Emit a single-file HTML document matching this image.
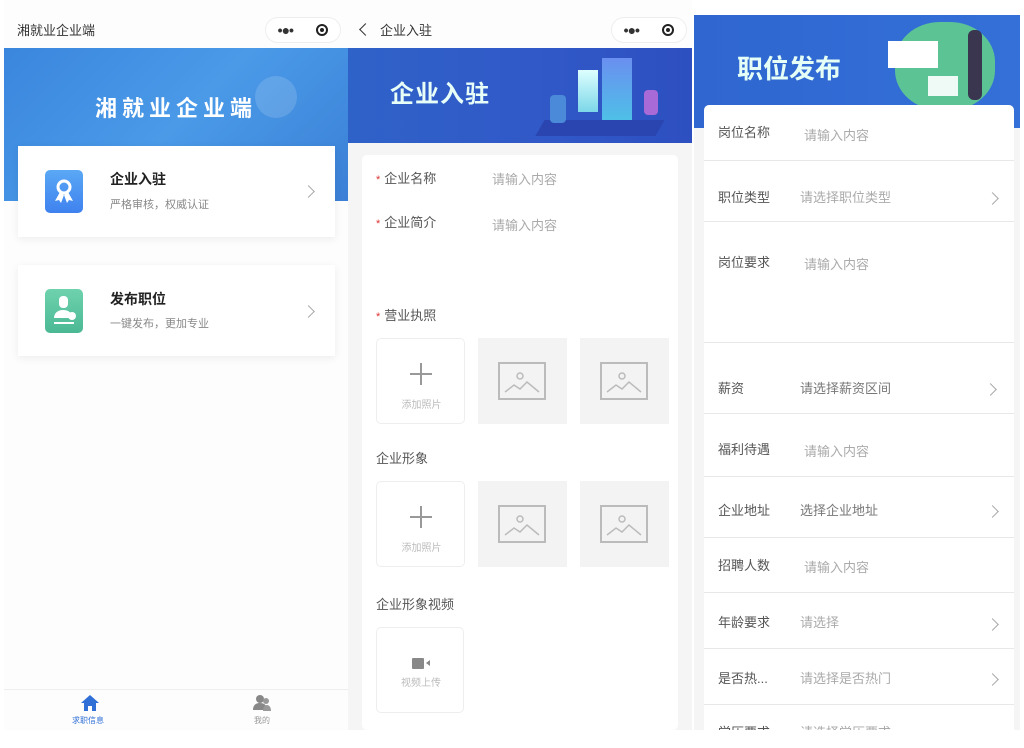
<!DOCTYPE html>
<html><head><meta charset="utf-8"><style>
*{margin:0;padding:0;box-sizing:border-box}
body{width:1024px;height:748px;background:#fff;position:relative;overflow:hidden;font-family:"Liberation Sans","Noto Sans CJK SC",sans-serif;color:#333;line-height:1}
.a{position:absolute}
.cap{display:flex;align-items:center;justify-content:space-around;border:1px solid #eee;border-radius:16px;background:#fff;width:76px;height:26px}
.dot{width:12px;height:12px;border:2px solid #222;border-radius:50%;position:relative}
.dot:after{content:"";position:absolute;left:2px;top:2px;width:4px;height:4px;background:#222;border-radius:50%}
.chev{width:9px;height:9px;border-top:1.5px solid #aaa;border-right:1.5px solid #aaa;transform:rotate(45deg)}
.lbl{font-size:13px;color:#555}
.ph{font-size:13px;color:#aaa}
.star{color:#d33;font-size:11px;margin-right:4px}
.box{border:1px solid #eee;border-radius:5px;background:#fff;width:89px;height:86px}
.img{background:#f3f3f3;width:89px;height:86px}
.img svg{position:absolute;left:20px;top:24px}
.plus{position:absolute;left:33px;top:24px;width:22px;height:22px}
.plus:before,.plus:after{content:"";position:absolute;background:#999}
.plus:before{left:10px;top:0;width:1.5px;height:22px}
.plus:after{top:10px;left:0;height:1.5px;width:22px}
.bt{position:absolute;left:0;width:89px;text-align:center;font-size:10px;color:#bbb}
.row{position:absolute;left:704px;width:310px;border-bottom:1px solid #e8e8e8}
</style></head><body>

<!-- Panel 1 -->
<div class="a" style="left:4px;top:0;width:344px;height:730px;background:#fdfdfd"></div>
<div class="a" style="left:17px;top:24px;font-size:13px;color:#333">湘就业企业端</div>
<div class="a cap" style="left:265px;top:17px"><span style="font-size:14px;font-weight:bold;letter-spacing:-1px">•●•</span><span class="dot"></span></div>
<div class="a" style="left:4px;top:48px;width:344px;height:153px;background:linear-gradient(135deg,#3a86de,#4a9ae8 50%,#3b80d6)"></div>
<div class="a" style="left:255px;top:76px;width:42px;height:42px;border-radius:50%;background:rgba(255,255,255,.15)"></div>
<div class="a" style="left:0;top:98px;width:352px;text-align:center;font-size:22px;color:#fff;letter-spacing:5px;font-weight:bold">湘就业企业端</div>
<div class="a" style="left:18px;top:146px;width:317px;height:91px;background:#fff;box-shadow:0 2px 8px rgba(0,0,0,.07)"></div>
<div class="a" style="left:45px;top:170px;width:38px;height:43px;border-radius:5px;background:linear-gradient(#5aa8f5,#3f82ef)"></div>
<svg class="a" style="left:45px;top:170px" width="38" height="43" viewBox="0 0 38 43"><circle cx="19" cy="17" r="6" fill="none" stroke="#fff" stroke-width="3"/><path d="M15 22l-5 9 4-1 2 3 3-8M23 22l5 9-4-1-2 3-3-8" fill="#fff"/></svg>
<div class="a" style="left:110px;top:172px;font-size:14px;font-weight:bold;color:#222">企业入驻</div>
<div class="a" style="left:110px;top:200px;font-size:11px;color:#888">严格审核，权威认证</div>
<div class="a chev" style="left:304px;top:187px"></div>
<div class="a" style="left:18px;top:265px;width:317px;height:91px;background:#fff;box-shadow:0 2px 8px rgba(0,0,0,.07)"></div>
<div class="a" style="left:45px;top:289px;width:38px;height:44px;border-radius:5px;background:linear-gradient(#6fd2ae,#4bb894)"></div>
<svg class="a" style="left:45px;top:289px" width="38" height="44" viewBox="0 0 38 44"><rect x="14" y="7" width="9" height="12" rx="4" fill="#fff"/><path d="M9 29c0-5 4-8 9-8s7 2 8 4v4z" fill="#fff"/><circle cx="27" cy="27" r="4" fill="#fff"/><rect x="9" y="33" width="20" height="2" fill="#fff"/></svg>
<div class="a" style="left:110px;top:292px;font-size:14px;font-weight:bold;color:#222">发布职位</div>
<div class="a" style="left:110px;top:319px;font-size:11px;color:#888">一键发布，更加专业</div>
<div class="a chev" style="left:304px;top:307px"></div>
<div class="a" style="left:4px;top:689px;width:344px;height:1px;background:#eee"></div>
<svg class="a" style="left:80px;top:694px" width="20" height="18" viewBox="0 0 20 18"><path d="M10 1L1 9h3v8h4v-5h4v5h4V9h3z" fill="#2f6fd6"/></svg>
<div class="a" style="left:72px;top:717px;font-size:8px;color:#2f6fd6">求职信息</div>
<svg class="a" style="left:252px;top:694px" width="20" height="18" viewBox="0 0 20 18"><circle cx="8" cy="5" r="4" fill="#888"/><path d="M1 16c0-5 3-7 7-7s7 2 7 7z" fill="#888"/><circle cx="14" cy="7" r="3" fill="#999"/><path d="M11 17c0-4 2-6 4-6s4 2 4 6z" fill="#999"/></svg>
<div class="a" style="left:254px;top:717px;font-size:8px;color:#999">我的</div>

<!-- Panel 2 -->
<div class="a" style="left:348px;top:0;width:344px;height:730px;background:#f5f5f5"></div>
<div class="a" style="left:348px;top:0;width:344px;height:48px;background:#fdfdfd"></div>
<div class="a" style="left:361px;top:25px;width:9px;height:9px;border-left:1.5px solid #333;border-bottom:1.5px solid #333;transform:rotate(45deg)"></div>
<div class="a" style="left:380px;top:24px;font-size:13px;color:#333">企业入驻</div>
<div class="a cap" style="left:611px;top:17px"><span style="font-size:14px;font-weight:bold;letter-spacing:-1px">•●•</span><span class="dot"></span></div>
<div class="a" style="left:348px;top:48px;width:344px;height:95px;background:linear-gradient(90deg,#2f62c9,#3158c7 60%,#2d4fc0)"></div>
<div class="a" style="left:578px;top:70px;width:20px;height:42px;background:linear-gradient(#dff,#7cd7e8)"></div>
<div class="a" style="left:602px;top:58px;width:30px;height:70px;background:linear-gradient(#6a8ff0,#4bc6e6)"></div>
<div class="a" style="left:540px;top:120px;width:120px;height:16px;background:#2a44b0;transform:skewX(-30deg)"></div>
<div class="a" style="left:550px;top:95px;width:16px;height:28px;background:#4a8ad8;border-radius:4px"></div>
<div class="a" style="left:644px;top:90px;width:14px;height:25px;background:#a86ad6;border-radius:4px"></div>
<div class="a" style="left:390px;top:83px;font-size:24px;font-weight:bold;color:#e8fff8;letter-spacing:1px">企业入驻</div>
<div class="a" style="left:362px;top:155px;width:316px;height:575px;background:#fff;border-radius:5px"></div>
<div class="a lbl" style="left:376px;top:172px"><span class="star">*</span>企业名称</div>
<div class="a ph" style="left:492px;top:173px">请输入内容</div>
<div class="a lbl" style="left:376px;top:216px"><span class="star">*</span>企业简介</div>
<div class="a ph" style="left:492px;top:219px">请输入内容</div>
<div class="a lbl" style="left:376px;top:309px"><span class="star">*</span>营业执照</div>
<div class="a box" style="left:376px;top:338px"><span class="plus"></span><span class="bt" style="top:62px">添加照片</span></div>
<div class="a img" style="left:478px;top:338px"><svg width="48" height="38" viewBox="0 0 48 38"><rect x="1" y="1" width="46" height="36" fill="none" stroke="#bbb" stroke-width="2"/><circle cx="22" cy="14" r="3" fill="none" stroke="#bbb" stroke-width="1.5"/><path d="M7 30l9-7 6 4 7-7 12 10" fill="none" stroke="#bbb" stroke-width="1.5"/></svg></div>
<div class="a img" style="left:580px;top:338px"><svg width="48" height="38" viewBox="0 0 48 38"><rect x="1" y="1" width="46" height="36" fill="none" stroke="#bbb" stroke-width="2"/><circle cx="22" cy="14" r="3" fill="none" stroke="#bbb" stroke-width="1.5"/><path d="M7 30l9-7 6 4 7-7 12 10" fill="none" stroke="#bbb" stroke-width="1.5"/></svg></div>
<div class="a lbl" style="left:376px;top:452px">企业形象</div>
<div class="a box" style="left:376px;top:481px"><span class="plus"></span><span class="bt" style="top:62px">添加照片</span></div>
<div class="a img" style="left:478px;top:481px"><svg width="48" height="38" viewBox="0 0 48 38"><rect x="1" y="1" width="46" height="36" fill="none" stroke="#bbb" stroke-width="2"/><circle cx="22" cy="14" r="3" fill="none" stroke="#bbb" stroke-width="1.5"/><path d="M7 30l9-7 6 4 7-7 12 10" fill="none" stroke="#bbb" stroke-width="1.5"/></svg></div>
<div class="a img" style="left:580px;top:481px"><svg width="48" height="38" viewBox="0 0 48 38"><rect x="1" y="1" width="46" height="36" fill="none" stroke="#bbb" stroke-width="2"/><circle cx="22" cy="14" r="3" fill="none" stroke="#bbb" stroke-width="1.5"/><path d="M7 30l9-7 6 4 7-7 12 10" fill="none" stroke="#bbb" stroke-width="1.5"/></svg></div>
<div class="a lbl" style="left:376px;top:598px">企业形象视频</div>
<div class="a box" style="left:376px;top:627px;width:88px"><span class="a" style="left:35px;top:30px;width:12px;height:11px;background:#888;border-radius:1px"></span><span class="a" style="left:46px;top:32px;border:3.5px solid transparent;border-right:4px solid #888"></span><span class="bt" style="top:51px;width:88px">视频上传</span></div>

<!-- Panel 3 -->
<div class="a" style="left:694px;top:15px;width:326px;height:715px;background:#f5f5f5"></div>
<div class="a" style="left:694px;top:15px;width:326px;height:113px;background:linear-gradient(90deg,#2f66d0,#3470d8)"></div>
<div class="a" style="left:895px;top:22px;width:100px;height:88px;border-radius:45%;background:#5cc494"></div>
<div class="a" style="left:888px;top:41px;width:50px;height:27px;background:#fff"></div>
<div class="a" style="left:928px;top:76px;width:30px;height:20px;background:#fff;opacity:.9"></div>
<div class="a" style="left:968px;top:30px;width:14px;height:70px;background:#3a3650;border-radius:6px"></div>
<div class="a" style="left:737px;top:56px;font-size:26px;font-weight:bold;color:#e6fff6">职位发布</div>
<div class="a" style="left:704px;top:105px;width:310px;height:625px;background:#fff;border-radius:5px 5px 0 0"></div>
<div class="row" style="top:105px;height:56px"></div>
<div class="row" style="top:161px;height:61px"></div>
<div class="row" style="top:222px;height:121px"></div>
<div class="row" style="top:343px;height:71px"></div>
<div class="row" style="top:414px;height:63px"></div>
<div class="row" style="top:477px;height:61px"></div>
<div class="row" style="top:538px;height:55px"></div>
<div class="row" style="top:593px;height:56px"></div>
<div class="row" style="top:649px;height:56px"></div>
<div class="a lbl" style="left:718px;top:126px">岗位名称</div><div class="a ph" style="left:804px;top:129px">请输入内容</div>
<div class="a lbl" style="left:718px;top:191px">职位类型</div><div class="a ph" style="left:800px;top:191px">请选择职位类型</div><div class="a chev" style="left:988px;top:194px"></div>
<div class="a lbl" style="left:718px;top:256px">岗位要求</div><div class="a ph" style="left:804px;top:258px">请输入内容</div>
<div class="a lbl" style="left:718px;top:382px">薪资</div><div class="a ph" style="left:800px;top:382px;color:#777">请选择薪资区间</div><div class="a chev" style="left:986px;top:385px"></div>
<div class="a lbl" style="left:718px;top:443px">福利待遇</div><div class="a ph" style="left:804px;top:445px">请输入内容</div>
<div class="a lbl" style="left:718px;top:504px">企业地址</div><div class="a ph" style="left:800px;top:504px;color:#777">选择企业地址</div><div class="a chev" style="left:988px;top:507px"></div>
<div class="a lbl" style="left:718px;top:559px">招聘人数</div><div class="a ph" style="left:804px;top:561px">请输入内容</div>
<div class="a lbl" style="left:718px;top:616px">年龄要求</div><div class="a ph" style="left:800px;top:616px">请选择</div><div class="a chev" style="left:988px;top:620px"></div>
<div class="a lbl" style="left:718px;top:672px">是否热...</div><div class="a ph" style="left:800px;top:672px">请选择是否热门</div><div class="a chev" style="left:988px;top:675px"></div>
<div class="a lbl" style="left:718px;top:726px">学历要求</div><div class="a ph" style="left:800px;top:726px">请选择学历要求</div>
<div class="a" style="left:0;top:730px;width:1024px;height:18px;background:#fff"></div>
</body></html>
